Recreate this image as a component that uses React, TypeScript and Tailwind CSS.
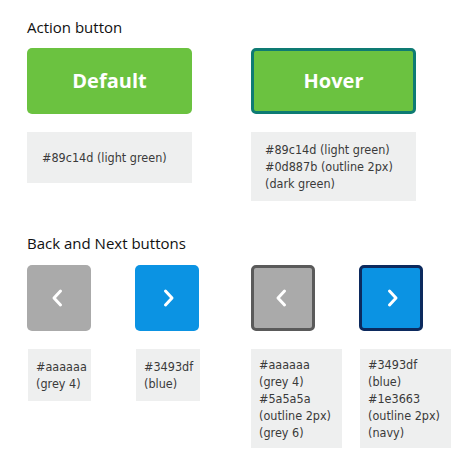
const FONT = "font-['Open_Sans',sans-serif]";

function Chevron({ dir }: { dir: "back" | "next" }) {
  return (
    <svg width="12" height="16" viewBox="0 0 12 16" className="overflow-visible">
      <polyline
        points={dir === "back" ? "7.5,1 1,8 7.5,15" : "4.5,1 11,8 4.5,15"}
        fill="none"
        stroke="white"
        strokeWidth="3"
        strokeLinecap="round"
        strokeLinejoin="round"
      />
    </svg>
  );
}

function Note({ lines, className }: { lines: string[]; className: string }) {
  return (
    <div
      className={`bg-[#eeefef] font-['DejaVu_Sans_Condensed','DejaVu_Sans',sans-serif] text-[12.5px] leading-[17px] text-[#3a3a3a] whitespace-nowrap ${className}`}
    >
      {lines.map((l) => (
        <div key={l}>{l}</div>
      ))}
    </div>
  );
}

function Square({ className, dir }: { className: string; dir: "back" | "next" }) {
  return (
    <div className={`flex h-[66px] w-[64px] items-center justify-center rounded-[5px] ${className}`}>
      <Chevron dir={dir} />
    </div>
  );
}

export default function App() {
  return (
    <div className={`min-h-[471px] bg-white px-[27px] pt-[17px] ${FONT}`}>
      <h2 className="text-[15px] leading-[20px] text-[#111]">Action button</h2>

      <div className="mt-[11px] grid grid-cols-[224px_165px] items-start">
        <div className="flex flex-col">
          <div className="flex h-[66px] w-[165px] items-center justify-center rounded-[5px] bg-[#6bc240] text-[20px] font-bold text-white">
            Default
          </div>
          <Note lines={["#89c14d (light green)"]} className="mt-[18px] w-[165px] px-[15px] py-[17px]" />
        </div>
        <div className="flex flex-col">
          <div className="flex h-[66px] w-[165px] items-center justify-center rounded-[5px] border-[3px] border-[#0e7b73] bg-[#6bc240] text-[20px] font-bold text-white">
            Hover
          </div>
          <Note
            lines={["#89c14d (light green)", "#0d887b (outline 2px)", "(dark green)"]}
            className="mt-[18px] w-[165px] px-[14px] py-[9px]"
          />
        </div>
      </div>

      <h2 className="mt-[32px] text-[15px] leading-[20px] text-[#111]">Back and Next buttons</h2>

      <div className="mt-[12px] grid grid-cols-[108px_116px_108px_auto] items-start">
        <div className="flex flex-col items-start">
          <Square dir="back" className="bg-[#aaaaaa]" />
          <Note lines={["#aaaaaa", "(grey 4)"]} className="mt-[18px] ml-px w-[63px] px-[8px] py-[9px]" />
        </div>
        <div className="flex flex-col items-start">
          <Square dir="next" className="bg-[#0b93e3]" />
          <Note lines={["#3493df", "(blue)"]} className="mt-[18px] ml-px w-[64px] px-[8px] py-[9px]" />
        </div>
        <div className="flex flex-col items-start">
          <Square dir="back" className="border-[3px] border-[#5a5a5a] bg-[#aaaaaa]" />
          <Note
            lines={["#aaaaaa", "(grey 4)", "#5a5a5a", "(outline 2px)", "(grey 6)"]}
            className="mt-[18px] w-[91px] px-[8px] py-[7px]"
          />
        </div>
        <div className="flex flex-col items-start">
          <Square dir="next" className="border-[3px] border-[#0c2a5e] bg-[#0b93e3]" />
          <Note
            lines={["#3493df", "(blue)", "#1e3663", "(outline 2px)", "(navy)"]}
            className="mt-[18px] ml-px w-[91px] px-[8px] py-[7px]"
          />
        </div>
      </div>
    </div>
  );
}
